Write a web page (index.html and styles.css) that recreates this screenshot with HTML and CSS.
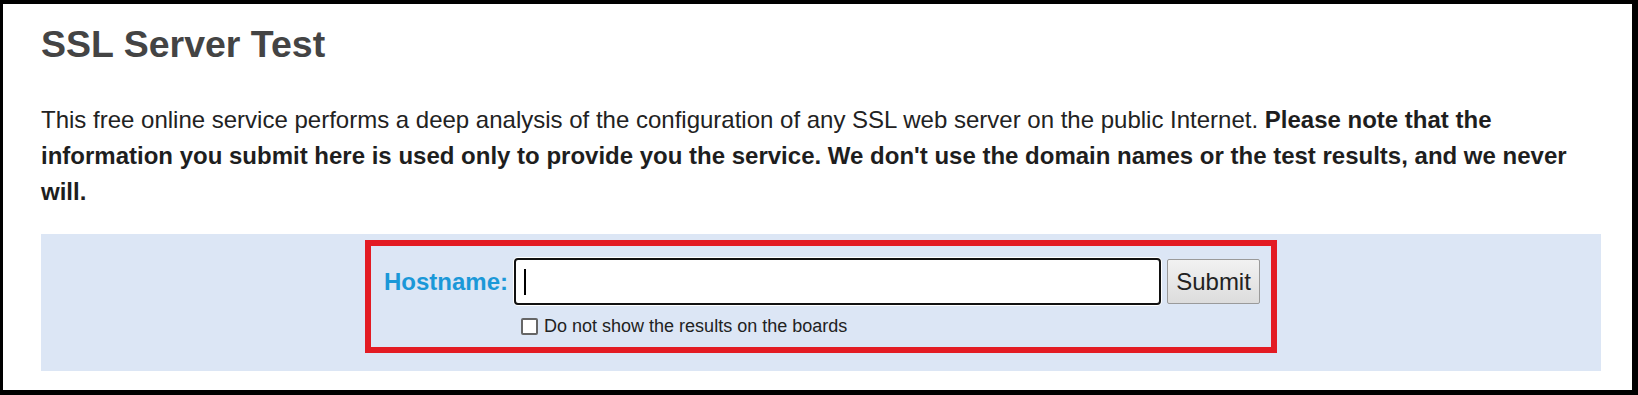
FILE: index.html
```html
<!DOCTYPE html>
<html lang="en">
<head>
  <meta charset="UTF-8">
  <title>SSL Server Test</title>
  <link rel="stylesheet" href="styles.css">
</head>
<body>
  <div class="page">
    <h1>SSL Server Test</h1>
    <p class="intro">This free online service performs a deep analysis of the configuration of any SSL web server on the public Internet. <b>Please note that the information you submit here is used only to provide you the service. We don't use the domain names or the test results, and we never will.</b></p>
    <div class="submit-area">
      <form class="host-form">
        <label class="host-label" for="hostname">Hostname:</label>
        <div class="host-input" id="hostname"><span class="caret"></span></div>
        <button type="button" class="submit-btn">Submit</button>
        <label class="hide-opt"><input type="checkbox" class="hide-box"><span>Do not show the results on the boards</span></label>
      </form>
    </div>
  </div>
</body>
</html>
```
FILE: styles.css
```css
* { margin:0; padding:0; box-sizing:border-box; }
body {
  background: #000;
  padding: 4px 6px 5px 3px;
  font-family: "Liberation Sans", Arial, sans-serif;
  color: #222;
}
.page {
  background: #fff;
  height: 386px;
  padding: 0 31px 0 38px;
}
h1 {
  font-size: 37.5px;
  line-height: 42px;
  font-weight: bold;
  color: #444;
  padding-top: 19px;
  margin-bottom: 37px;
}
.intro {
  font-size: 24px;
  line-height: 36px;
  color: #222;
  margin-bottom: 24px;
}
.intro b { color: #1e1e1e; }
.submit-area {
  background: #dce6f5;
  height: 137px;
  padding-top: 6px;
  display: flex;
  justify-content: center;
  align-items: flex-start;
}
.host-form {
  border: 6px solid #e31b23;
  width: 912px;
  height: 113px;
  padding: 12px 12px 0 13px;
  display: grid;
  grid-template-columns: auto 647px auto;
  align-content: start;
  align-items: center;
  column-gap: 6px;
}
.host-label {
  font-size: 24px;
  font-weight: bold;
  color: #1b98d8;
}
.host-input {
  height: 47px;
  background: #fff;
  border: 2px solid #111;
  border-radius: 4px;
  box-shadow: 0 0 0 1px #fff;
  padding-left: 8px;
  display: flex;
  align-items: center;
}
.caret {
  width: 2px;
  height: 26px;
  background: #000;
}
.submit-btn {
  height: 45px;
  width: 93px;
  font-family: "Liberation Sans", Arial, sans-serif;
  font-size: 24px;
  color: #222;
  background: linear-gradient(#f2f2f2, #dcdcdc);
  border: 1px solid #9a9a9a;
  border-radius: 2px;
}
.hide-opt {
  grid-column: 2 / 4;
  margin-top: 11px;
  padding-left: 7px;
  display: flex;
  align-items: center;
  gap: 6px;
  font-size: 18px;
  color: #222;
}
.hide-box {
  appearance: none;
  width: 17px;
  height: 17px;
  border: 2px solid #666;
  border-radius: 2px;
  background: #fff;
}
```
